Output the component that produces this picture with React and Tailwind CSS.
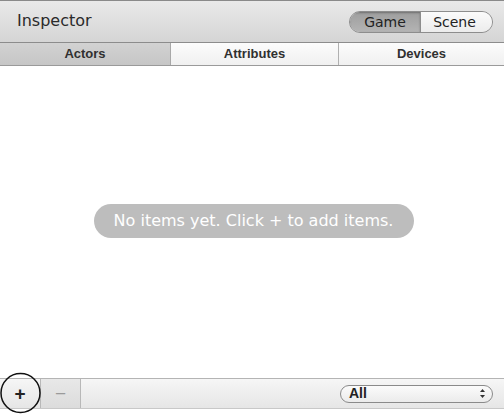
export default function App() {
  const font = { fontFamily: '"Liberation Sans", Arial, sans-serif' };
  const dv = { fontFamily: '"DejaVu Sans", Verdana, sans-serif' };
  return (
    <div className="relative w-[504px] h-[415px] bg-white flex flex-col overflow-hidden" style={font}>
      {/* header */}
      <div className="h-[43px] border-t border-t-[#8a8a8a] border-b border-b-[#8c8c8c] bg-gradient-to-b from-[#e9e9e9] to-[#d5d5d5] flex items-center justify-between pl-[17px] pr-[11px]">
        <span className="text-[16px] text-[#2a2a2a] mt-[-1px]" style={dv}>Inspector</span>
        <div className="flex h-[22px] w-[144px] rounded-full border border-[#8d8d8d] overflow-hidden text-[14px] text-[#222] mt-[1px]" style={dv}>
          <div className="w-[71px] flex items-center justify-center bg-gradient-to-b from-[#9e9e9e] to-[#b4b4b4] border-r border-[#8d8d8d] shadow-[inset_0_1px_2px_rgba(0,0,0,0.3)]">Game</div>
          <div className="flex-1 flex items-center justify-center bg-gradient-to-b from-[#fbfbfb] to-[#ececec] pr-[4px]">Scene</div>
        </div>
      </div>
      {/* tabs */}
      <div className="h-[23px] flex border-b border-b-[#9a9a9a] text-[13px] font-bold text-[#303030]">
        <div className="w-[171px] flex items-center justify-center bg-gradient-to-b from-[#d2d2d2] to-[#c6c6c6] border-r border-r-[#a8a8a8]">Actors</div>
        <div className="w-[168px] flex items-center justify-center bg-gradient-to-b from-[#fcfcfc] to-[#f0f0f0] border-r border-r-[#b0b0b0]">Attributes</div>
        <div className="flex-1 flex items-center justify-center bg-gradient-to-b from-[#fcfcfc] to-[#f0f0f0]">Devices</div>
      </div>
      {/* content */}
      <div className="h-[312px] flex items-center justify-center">
        <div className="w-[320px] h-[34px] rounded-full bg-[#bdbdbd] flex items-center justify-center text-white text-[16px] mt-[-3px] ml-[3px]" style={dv}>
          No items yet. Click + to add items.
        </div>
      </div>
      {/* bottom bar */}
      <div className="h-[31px] border-t border-t-[#b4b4b4] border-b border-b-[#c8c8c8] flex bg-gradient-to-b from-[#f6f6f6] to-[#e6e6e6]">
        <div className="w-[41px] flex items-center justify-center border-r border-r-[#b8b8b8] text-[19px] font-bold text-[#222] pt-[2px]">+</div>
        <div className="w-[40px] flex items-center justify-center border-r border-r-[#b8b8b8] bg-gradient-to-b from-[#e8e8e8] to-[#dcdcdc] text-[19px] text-[#9a9a9a] pt-[2px]">−</div>
        <div className="flex-1 flex items-center justify-end pr-[11px]">
          <div className="w-[153px] h-[18px] rounded-full border border-[#8a8a8a] bg-gradient-to-b from-[#fbfbfb] to-[#ebebeb] flex items-center justify-between pl-[8px] pr-[6px] text-[14px] font-bold text-[#222]">
            <span>All</span>
            <svg width="7" height="11" viewBox="0 0 7 11">
              <path d="M3.5 1 L6 4 L1 4 Z" fill="#333" />
              <path d="M3.5 10 L6 7 L1 7 Z" fill="#333" />
            </svg>
          </div>
        </div>
      </div>
      <div className="flex-1" />
      <svg className="absolute left-0 top-[372px]" width="42" height="42" viewBox="0 0 42 42">
        <circle cx="20.5" cy="21" r="19.5" fill="none" stroke="#111" strokeWidth="1.5" />
      </svg>
    </div>
  );
}
